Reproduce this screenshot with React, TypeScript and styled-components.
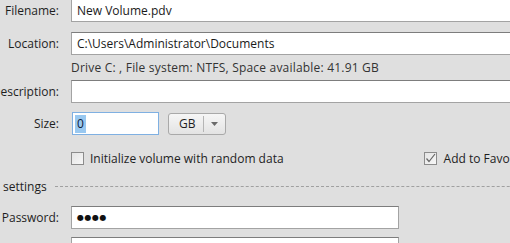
import React from "react";
import styled, { createGlobalStyle } from "styled-components";

const Global = createGlobalStyle`
  html, body { margin: 0; padding: 0; background: #dfdfdf; overflow: hidden; }
  body { font-family: "Open Sans", "DejaVu Sans", sans-serif; font-size: 12px; color: #1e1e1e; }
`;

const Form = styled.div`
  width: 580px;
  margin-top: -1px;
  display: flex;
  flex-direction: column;
`;

const Row = styled.div<{ $mt?: number; $h?: number }>`
  display: grid;
  grid-template-columns: 59px 1fr;
  column-gap: 12px;
  align-items: center;
  margin-top: ${(p) => p.$mt ?? 0}px;
  height: ${(p) => p.$h ?? 23}px;
`;

const Label = styled.div<{ $shift?: number }>`
  display: flex;
  justify-content: flex-end;
  white-space: nowrap;
  padding-right: ${(p) => p.$shift ?? 0}px;
  margin-right: ${(p) => -(p.$shift ?? 0)}px;
`;

const Field = styled.div<{ $w?: number }>`
  box-sizing: border-box;
  height: 23px;
  width: ${(p) => (p.$w ? `${p.$w}px` : "100%")};
  background: #fff;
  border: 1px solid #a3a3a3;
  border-top-color: #7d7d7d;
  display: flex;
  align-items: center;
  padding-left: 5px;
  color: #1a1a1a;
  white-space: nowrap;
  overflow: hidden;
`;

const Info = styled.div`
  color: #333;
  white-space: nowrap;
  letter-spacing: 0.2px;
`;

const SizeGroup = styled.div`
  display: flex;
  align-items: center;
  gap: 9px;
  margin-left: 1px;
`;

const FocusField = styled(Field)`
  border: 1px solid #7fb0e2;
  padding-left: 2px;
`;

const Selected = styled.span`
  background: #99c8f0;
  color: #10203a;
  padding: 1px 2px;
  line-height: 16px;
`;

const Combo = styled.div`
  box-sizing: border-box;
  width: 58px;
  height: 22px;
  border: 1px solid #a9a9a9;
  border-radius: 3px;
  background: linear-gradient(#f6f6f6, #e3e3e3);
  display: flex;
  align-items: center;
`;

const ComboText = styled.div`
  width: 35px;
  box-sizing: border-box;
  padding-left: 10px;
  border-right: 1px solid #b5b5b5;
  height: 16px;
  line-height: 16px;
`;

const ComboArrow = styled.div`
  flex: 1;
  display: flex;
  justify-content: center;
  align-items: center;
`;

const CheckRow = styled.div`
  display: flex;
  align-items: center;
  margin-top: 12px;
  height: 22px;
  padding-left: 71px;
`;

const CheckItem = styled.div<{ $ml?: number; $gap?: number }>`
  display: flex;
  align-items: center;
  gap: ${(p) => p.$gap ?? 6}px;
  margin-left: ${(p) => p.$ml ?? 0}px;
  white-space: nowrap;
`;

const Box = styled.div`
  box-sizing: border-box;
  width: 13px;
  height: 13px;
  border: 1px solid #8c8c8c;
  background: linear-gradient(135deg, #e4e4e4, #f7f7f7);
  display: flex;
  align-items: center;
  justify-content: center;
`;

const Section = styled.div`
  display: flex;
  align-items: center;
  gap: 8px;
  margin-top: 9px;
  height: 16px;
  padding-left: 3px;
`;

const Dashes = styled.div`
  flex: 1;
  border-top: 1px dashed #a0a0a0;
  height: 0;
`;

const Dots = styled.span`
  font-size: 8px;
  letter-spacing: 0.5px;
  font-family: "DejaVu Sans", sans-serif;
  color: #111;
`;

export default function App() {
  return (
    <>
      <Global />
      <Form>
        <Row>
          <Label>Filename:</Label>
          <Field>New Volume.pdv</Field>
        </Row>
        <Row $mt={10}>
          <Label>Location:</Label>
          <Field>C:\Users\Administrator\Documents</Field>
        </Row>
        <Row $h={25}>
          <span />
          <Info>Drive C: , File system: NTFS, Space available: 41.91 GB</Info>
        </Row>
        <Row>
          <Label>Description:</Label>
          <Field />
        </Row>
        <Row $mt={9}>
          <Label $shift={3}>Size:</Label>
          <SizeGroup>
            <FocusField $w={87}>
              <Selected>0</Selected>
            </FocusField>
            <Combo>
              <ComboText>GB</ComboText>
              <ComboArrow>
                <svg width="7" height="4" viewBox="0 0 7 4">
                  <path d="M0 0 L7 0 L3.5 4 Z" fill="#6a6a6a" />
                </svg>
              </ComboArrow>
            </Combo>
          </SizeGroup>
        </Row>
        <CheckRow>
          <CheckItem>
            <Box />
            Initialize volume with random data
          </CheckItem>
          <CheckItem $ml={140} $gap={7}>
            <Box>
              <svg width="11" height="11" viewBox="0 0 11 11">
                <path d="M1.5 5.5 L4 8.5 L10 1" fill="none" stroke="#666" strokeWidth="1.2" />
              </svg>
            </Box>
            Add to Favorites
          </CheckItem>
        </CheckRow>
        <Section>
          settings
          <Dashes />
        </Section>
        <Row $mt={12}>
          <Label>Password:</Label>
          <Field $w={328}>
            <Dots>●●●●</Dots>
          </Field>
        </Row>
        <Row $mt={8}>
          <Label>Confirm:</Label>
          <Field $w={328} />
        </Row>
      </Form>
    </>
  );
}
